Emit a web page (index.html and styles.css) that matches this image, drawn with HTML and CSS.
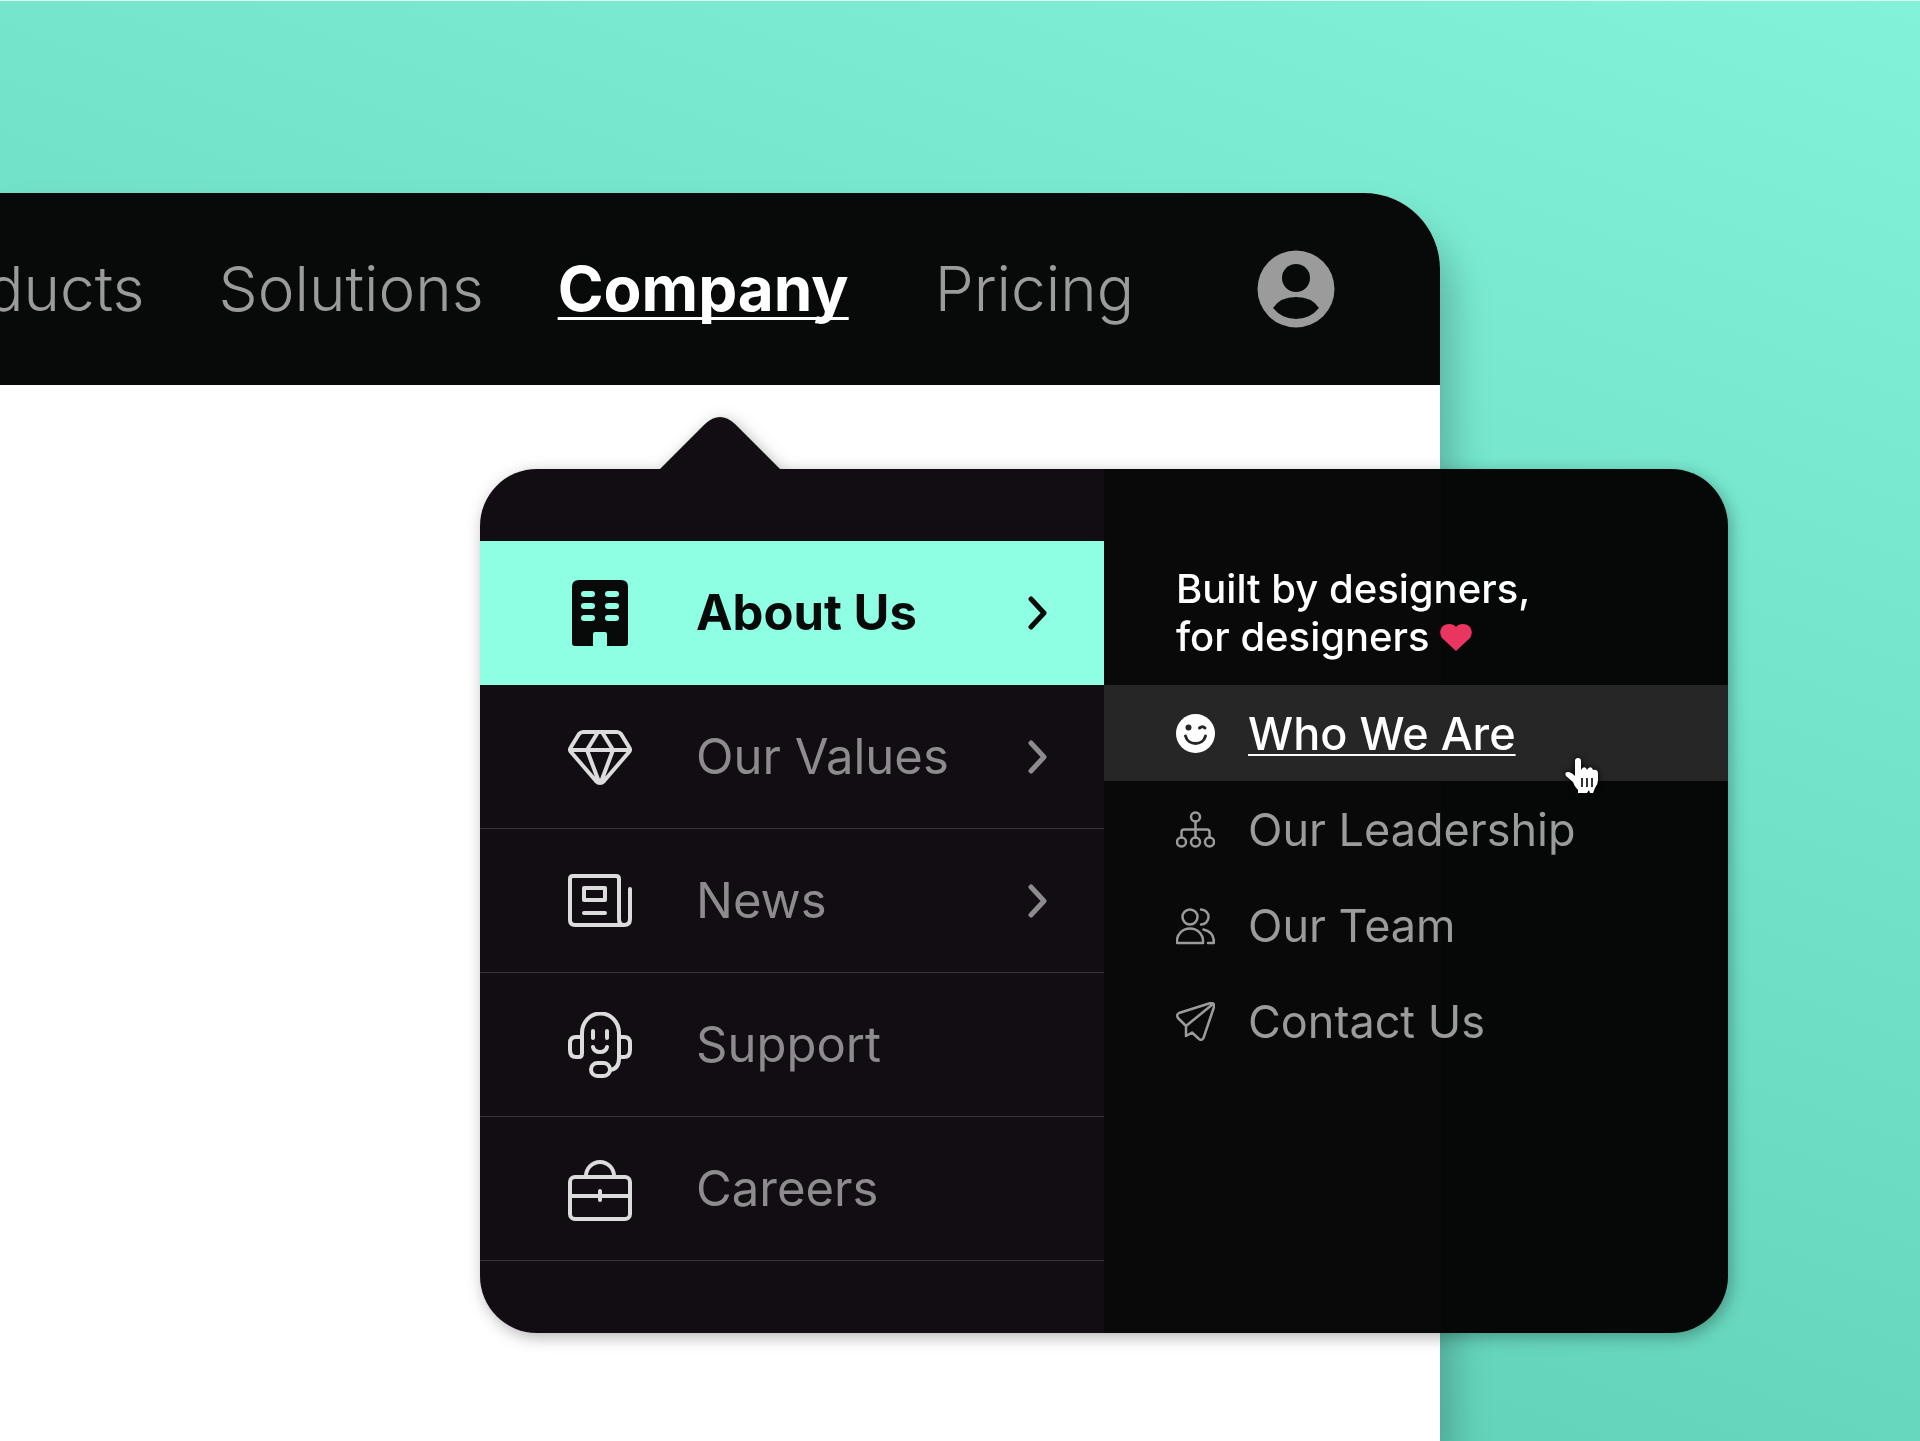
FILE: index.html
```html
<!DOCTYPE html>
<html lang="en">
<head>
  <meta charset="UTF-8" />
  <meta name="viewport" content="width=device-width, initial-scale=1.0"/>
  <title>Company menu</title>
  <link rel="stylesheet" href="styles.css">
</head>
<body>
  <div class="browser">
    <header class="navbar">
      <nav class="nav-links">
        <a href="#">Products</a>
        <a href="#">Solutions</a>
        <a class="active" href="#">Company</a>
        <a href="#">Pricing</a>
      </nav>
      <button class="avatar" aria-label="Account">
        <svg viewBox="0 0 78 78">
          <circle cx="39" cy="39" r="38.500" fill="#9b9b9b"/>
          <circle cx="39" cy="28" r="14" fill="#080a09"/>
          <path d="M16 58 Q23 47 39 47 Q55 47 62 58 Q53 69 39 69 Q25 69 16 58 Z" fill="#080a09"/>
        </svg>
      </button>
    </header>
  </div>

  <div class="dropdown">
    <svg class="arrow" viewBox="0 0 120 53">
      <path d="M0 53 L45 8 Q60 -6 75 8 L120 53 Z" fill="#120d13"/>
    </svg>

    <ul class="menu">
      <li>
        <a class="menu-item selected" href="#">
          <svg class="icon" viewBox="0 0 64 66">
            <path fill="#080a09" fill-rule="evenodd" d="M11 0H53Q60 0 60 7V63Q60 66 57 66H39V54Q39 52 37 52H27Q25 52 25 54V66H7Q4 66 4 63V7Q4 0 11 0Z"/>
            <path class="windows" d="M16 14h8M40 14h8M16 26h8M40 26h8M16 38h8M40 38h8"/>
          </svg>
          <span>About Us</span>
          <svg class="chevron" viewBox="0 0 20 34"><path d="M3 3 L16 17 L3 31"/></svg>
        </a>
      </li>
      <li>
        <a class="menu-item" href="#">
          <svg class="icon" viewBox="0 0 64 66">
            <path d="M15 8H49Q51 8 53 10L61 23Q63 26 61 28L36 57Q32 61 28 57L3 28Q1 26 3 23L11 10Q13 8 15 8ZM2 26H62M30 8L19 26L31 58M34 8L45 26L33 58"/>
          </svg>
          <span>Our Values</span>
          <svg class="chevron" viewBox="0 0 20 34"><path d="M3 3 L16 17 L3 31"/></svg>
        </a>
      </li>
      <li>
        <a class="menu-item" href="#">
          <svg class="icon" viewBox="0 0 64 66">
            <path d="M5 8H48Q51 8 51 11V51Q51 57 56 57Q62 57 62 51V21M56 57H7Q2 57 2 52V11Q2 8 5 8M16 20H37V32H16ZM16 45H37"/>
          </svg>
          <span>News</span>
          <svg class="chevron" viewBox="0 0 20 34"><path d="M3 3 L16 17 L3 31"/></svg>
        </a>
      </li>
      <li>
        <a class="menu-item" href="#">
          <svg class="icon" viewBox="0 0 64 66">
            <path d="M14 41V21A18 19 0 0 1 51 21V46Q51 57 42 58M14 25H8Q2 25 2 31V38Q2 45 8 45H11Q14 45 14 41M51 25H56Q62 25 62 31V38Q62 45 56 45H51M25 19V26M39 19V26M25 35Q26 40 32 40Q38 40 39 35"/>
            <rect x="23" y="51" width="19" height="13" rx="6.500"/>
          </svg>
          <span>Support</span>
        </a>
      </li>
      <li>
        <a class="menu-item" href="#">
          <svg class="icon" viewBox="0 0 64 66">
            <rect x="2" y="21" width="60" height="42" rx="5"/>
            <path d="M2 40H62M32 35V44M18 20A14 14 0 0 1 46 20"/>
          </svg>
          <span>Careers</span>
        </a>
      </li>
    </ul>

    <div class="submenu">
      <p class="tagline">
        Built by designers,<br/>for designers
        <svg class="heart" viewBox="0 0 32 27"><path fill="#ea3560" d="M16 27L2 14C-2 8 1 0 9 0Q14 0 16 3Q18 0 23 0C31 0 34 8 30 14Z"/></svg>
      </p>
      <a class="sub-item current" href="#">
        <svg class="sub-icon" viewBox="0 0 39 39">
          <circle cx="19.500" cy="19.500" r="19.500" fill="#fff" stroke="none"/>
          <circle cx="12.500" cy="13.500" r="3" fill="#262626" stroke="none"/>
          <path stroke="#262626" stroke-width="3" d="M23.500 14Q26.500 11.500 29 14M9.500 22C12 32 27 32 29.500 22"/>
        </svg>
        <span>Who We Are</span>
      </a>
      <a class="sub-item" href="#">
        <svg class="sub-icon" viewBox="0 0 39 39">
          <g stroke-width="2.500">
            <circle cx="19.500" cy="7" r="4.500"/>
            <circle cx="5.500" cy="32" r="4.500"/>
            <circle cx="19.500" cy="32" r="4.500"/>
            <circle cx="33.500" cy="32" r="4.500"/>
            <path d="M19.500 11.500V27.500M5.500 27.500V22Q5.500 19.500 8 19.500H31Q33.500 19.500 33.500 22V27.500"/>
          </g>
        </svg>
        <span>Our Leadership</span>
      </a>
      <a class="sub-item" href="#">
        <svg class="sub-icon" viewBox="0 0 39 39">
          <g stroke-width="2.500">
            <circle cx="14" cy="11" r="7.500"/>
            <path d="M1 37V35A13 12.500 0 0 1 27 35V37ZM25 3.500A7.500 7.500 0 0 1 25 18.500M27.500 23.500Q38 25.500 38 37H32"/>
          </g>
        </svg>
        <span>Our Team</span>
      </a>
      <a class="sub-item" href="#">
        <svg class="sub-icon" viewBox="0 0 39 39">
          <g stroke-width="2.500">
            <path d="M3 11L33 1.500Q39 0 38 5L27.500 36Q26 39 23 37L16 30.500L10 34V24L2 16Q0 12.500 3 11ZM10 24L37 2"/>
          </g>
        </svg>
        <span>Contact Us</span>
      </a>
      <svg class="pointer" viewBox="0 0 34 36">
        <path fill="#fff" d="M10 3Q10 0 13 0Q16 0 16 3V12Q18 8 21 10L22 12Q24 8 27 10L28 12Q33 11 33 16V22Q33 26 30 30L28 35H25L24 32L22 35H13V32Q9 28 8 24L1 18Q-1 14 3 14Q6 14 10 18Z"/>
        <path stroke="#333" stroke-width="2" d="M17 20V29M22 20V29M27 20V29"/>
      </svg>
    </div>
  </div>
</body>
</html>
```
FILE: styles.css
```css
* {
  box-sizing: border-box;
  margin: 0;
  padding: 0;
}

body {
  min-height: 100vh;
  display: grid;
  grid-template-columns: 25% 50% 15% 10%;
  grid-template-rows: 192px 276px auto 1fr;
  font-family: Inter, 'Open Sans', sans-serif;
  background: linear-gradient(20deg, #5ac9b0, #82f3d9);
  border-top: 1px solid #e0fbf5;
}

a {
  color: inherit;
  text-decoration: none;
}

.browser {
  grid-column: 1 / 3;
  grid-row: 2 / 5;
  background: white;
  border-radius: 0 76px 0 0;
  box-shadow: 10px 30px 40px rgba(0, 0, 0, 0.25);
}

.navbar {
  display: flex;
  align-items: center;
  justify-content: flex-end;
  gap: 123px;
  height: 192px;
  padding-right: 105px;
  background: #080a09;
  border-radius: 0 76px 0 0;
  overflow: hidden;
}

.nav-links {
  display: flex;
  gap: 74px;
  font-size: 62px;
  line-height: 72px;
  font-weight: 300;
  color: #9b9b9b;
}

.nav-links .active {
  margin-right: 12px;
  font-weight: 700;
  color: white;
  text-decoration: underline;
  text-decoration-thickness: 3px;
  text-underline-offset: 6px;
  text-decoration-skip-ink: none;
}

.avatar {
  flex: none;
  width: 78px;
  height: 78px;
  border: none;
  background: none;
  cursor: pointer;
}

.avatar svg {
  display: block;
}

.dropdown {
  position: relative;
  grid-column: 2 / 4;
  grid-row: 3;
  display: grid;
  grid-template-columns: 1fr 1fr;
  min-height: 864px;
  border-radius: 57px;
  background: linear-gradient(90deg, #120d13 50%, #090909 50%, #090909 77%, #060807 77%);
  filter: drop-shadow(3px 4px 8px rgba(0, 0, 0, 0.3));
}

.arrow {
  position: absolute;
  left: 180px;
  bottom: 100%;
  width: 120px;
}

.menu {
  list-style: none;
  padding-top: 72px;
  color: #8d8b8e;
}

.menu-item {
  display: flex;
  align-items: center;
  height: 144px;
  padding: 0 56px 0 88px;
  border-bottom: 1px solid #38343a;
  font-size: 49px;
}

.menu-item.selected {
  background: #8fffe3;
  border-color: #8fffe3;
  color: #080a09;
  font-weight: 700;
}

.icon {
  width: 64px;
  height: 66px;
  margin-right: 64px;
  fill: none;
  stroke: #dcdcdc;
  stroke-width: 4;
  stroke-linecap: round;
  stroke-linejoin: round;
}

.selected .icon {
  stroke: none;
}

.selected .windows {
  stroke: #8fffe3;
  stroke-width: 6;
}

.chevron {
  width: 20px;
  height: 34px;
  margin-left: auto;
  fill: none;
  stroke: currentColor;
  stroke-width: 5;
  stroke-linecap: round;
  stroke-linejoin: round;
}

.submenu {
  position: relative;
  color: #9b9b9b;
}

.tagline {
  padding: 96px 72px 24px;
  font-size: 40px;
  line-height: 48px;
  font-weight: 500;
  color: white;
}

.heart {
  width: 32px;
  height: 27px;
}

.sub-item {
  display: flex;
  align-items: center;
  gap: 33px;
  height: 96px;
  padding-left: 72px;
  font-size: 45px;
}

.sub-item.current {
  background: #262626;
  color: white;
  font-weight: 500;
}

.current span {
  text-decoration: underline;
  text-decoration-thickness: 2px;
  text-underline-offset: 4px;
}

.sub-icon {
  width: 39px;
  height: 39px;
  fill: none;
  stroke: #9b9b9b;
  stroke-linecap: round;
  stroke-linejoin: round;
}

.pointer {
  position: absolute;
  top: 289px;
  right: 129px;
  width: 34px;
  height: 36px;
  fill: none;
  filter: drop-shadow(0 0 3px black);
}
```
